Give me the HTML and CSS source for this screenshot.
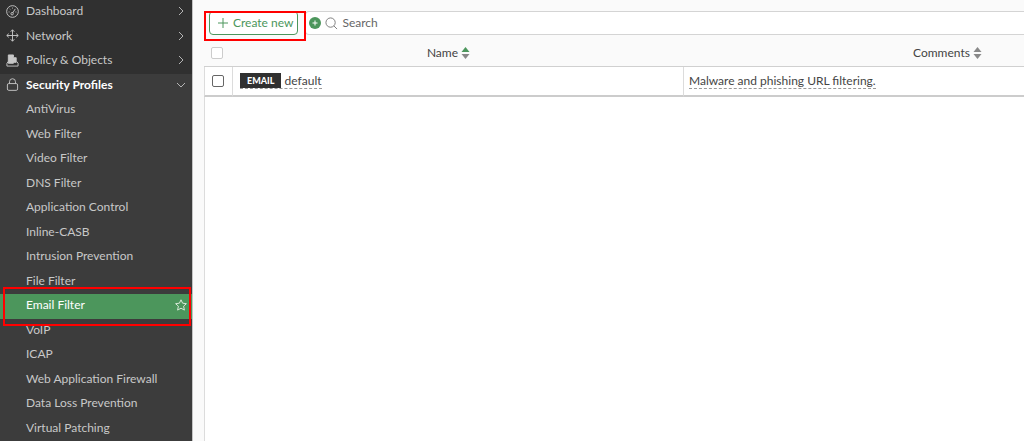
FILE: index.html
```html
<!DOCTYPE html>
<html lang="en">
<head>
  <meta charset="UTF-8">
  <title>Email Filter</title>
  <link rel="stylesheet" href="styles.css">
</head>
<body>

  <!-- Side menu -->
  <nav class="sidebar">
    <a class="item" href="#">
      <svg class="icon" viewBox="0 0 14 14"><circle cx="7" cy="7" r="6.3"/><path d="M7.2 8.6L10 4.2M2.8 7.5h1M4 4.3l.7.6M7 2.8v1M10.2 7.5h1"/><circle cx="6.6" cy="9.4" r="1.3"/></svg>
      <span>Dashboard</span>
      <svg class="arrow" viewBox="0 0 10 10"><path d="M3 1l4 4-4 4"/></svg>
    </a>
    <a class="item" href="#">
      <svg class="icon" viewBox="0 0 14 14"><path d="M7 1v12M1 7h12M5 3l2-2.2L9 3M5 11l2 2.2L9 11M3 5L.8 7 3 9M11 5l2.2 2L11 9"/></svg>
      <span>Network</span>
      <svg class="arrow" viewBox="0 0 10 10"><path d="M3 1l4 4-4 4"/></svg>
    </a>
    <a class="item" href="#">
      <svg class="icon" viewBox="0 0 14 14"><path class="solid" d="M2.5 1h5.5v3h3v5h-2l-1 1h-5.5z"/><path d="M2.5 8L1 10v3h12v-3l-1.5-2"/></svg>
      <span>Policy &amp; Objects</span>
      <svg class="arrow" viewBox="0 0 10 10"><path d="M3 1l4 4-4 4"/></svg>
    </a>
    <a class="item open" href="#">
      <svg class="icon" viewBox="0 0 14 14"><rect x="1.5" y="6" width="11" height="7.3" rx="1.5"/><path d="M3.8 6V4a3.2 3.2 0 0 1 6.4 0v2"/></svg>
      <span>Security Profiles</span>
      <svg class="arrow" viewBox="0 0 10 10"><path d="M1 3l4 4 4-4"/></svg>
    </a>
    <a class="item sub" href="#">AntiVirus</a>
    <a class="item sub" href="#">Web Filter</a>
    <a class="item sub" href="#">Video Filter</a>
    <a class="item sub" href="#">DNS Filter</a>
    <a class="item sub" href="#">Application Control</a>
    <a class="item sub" href="#">Inline-CASB</a>
    <a class="item sub" href="#">Intrusion Prevention</a>
    <a class="item sub" href="#">File Filter</a>
    <a class="item sub active" href="#">
      <span>Email Filter</span>
      <svg class="star" viewBox="0 0 12 12"><path d="M6 .8l1.6 3.4 3.8.5-2.8 2.5.8 3.9L6 9.2l-3.4 1.9.8-3.9L.6 4.7l3.8-.5z"/></svg>
    </a>
    <a class="item sub" href="#">VoIP</a>
    <a class="item sub" href="#">ICAP</a>
    <a class="item sub" href="#">Web Application Firewall</a>
    <a class="item sub" href="#">Data Loss Prevention</a>
    <a class="item sub" href="#">Virtual Patching</a>
  </nav>

  <main class="content">
    <!-- Toolbar -->
    <div class="toolbar">
      <div class="create-box">
        <button class="create" type="button">
          <svg class="plus" viewBox="0 0 10 10"><path d="M5 0v10M0 5h10"/></svg>
          Create new
        </button>
      </div>
      <div class="search">
        <svg class="add" viewBox="0 0 12 12"><circle cx="6" cy="6" r="6"/><path d="M6 3.5v5M3.5 6h5"/></svg>
        <svg class="lens" viewBox="0 0 14 14"><circle cx="6" cy="6" r="5"/><path d="M9.6 9.6L13 13"/></svg>
        <input type="text" aria-label="Search" placeholder="Search">
      </div>
    </div>

    <!-- Profile list -->
    <table class="profiles">
      <colgroup>
        <col class="col-check">
        <col class="col-name">
        <col>
      </colgroup>
      <thead>
        <tr>
          <th class="check"><input type="checkbox" aria-label="Select all" disabled></th>
          <th class="name">Name <svg class="sort asc" viewBox="0 0 8 12"><path class="up" d="M0 5l4-5 4 5z"/><path d="M0 7h8l-4 5z"/></svg></th>
          <th class="comments">Comments <svg class="sort" viewBox="0 0 8 12"><path class="up" d="M0 5l4-5 4 5z"/><path d="M0 7h8l-4 5z"/></svg></th>
        </tr>
      </thead>
      <tbody>
        <tr>
          <td class="check"><input type="checkbox" aria-label="Select default"></td>
          <td><span class="dotted"><span class="tag">EMAIL</span> default</span></td>
          <td class="comment"><span class="dotted">Malware and phishing URL filtering.</span></td>
        </tr>
      </tbody>
    </table>
    <div class="empty"></div>
  </main>

  <!-- Highlight frames -->
  <div class="frame frame-create"></div>
  <div class="frame frame-email"></div>

</body>
</html>
```
FILE: styles.css
```css
* { box-sizing: border-box; }
body {
  margin: 0;
  min-height: 100vh;
  display: flex;
  font-family: Lato, "Liberation Sans", sans-serif;
  font-size: 12px;
  line-height: 16px;
  color: #444;
  background: #fafafa;
}
svg {
  fill: none;
  stroke: currentColor;
  flex: none;
}

/* side menu */
.sidebar {
  width: 193px;
  flex: none;
  display: flex;
  flex-direction: column;
  background: #3c3c3c;
  border-right: 1px solid #c4c4c4;
}
.item {
  flex: 1;
  display: flex;
  align-items: center;
  padding: 0 6px 2px;
  color: #c8c8c8;
  background: #303030;
  text-decoration: none;
}
.item span { flex: 1; }
.icon { width: 13px; height: 13px; margin-right: 7px; color: #c8c8c8; }
.icon .solid { fill: currentColor; }
.arrow { width: 10px; height: 10px; color: #b4b4b4; }
.sub { padding-left: 26px; }
.open, .sub { background: #3c3c3c; }
.open { color: #fff; font-weight: bold; }
.active { padding-right: 5px; color: #fff; background: #4c965c; }
.star { width: 12px; height: 12px; color: #d8ead8; }

/* toolbar */
.content {
  flex: 1;
  min-width: 0;
  display: flex;
  flex-direction: column;
  padding: 11px 0 0 11px;
}
.toolbar { display: flex; }
.create-box { padding: 0 7px 0 5px; }
.create {
  display: flex;
  align-items: center;
  gap: 5px;
  height: 24px;
  padding: 0 4px 0 8px;
  font: inherit;
  color: #4c965c;
  background: #fff;
  border: 1px solid #4c965c;
  border-radius: 4px;
}
.plus { width: 10px; height: 10px; }
.search {
  flex: 1;
  display: flex;
  align-items: center;
  gap: 4px;
  padding-left: 3px;
  background: #fff;
  border: 1px solid #d4d4d4;
  border-right: 0;
  border-radius: 4px 0 0 4px;
}
.search input {
  flex: 1;
  min-width: 0;
  padding: 0;
  font: inherit;
  color: #444;
  background: none;
  border: 0;
  outline: 0;
}
.search input::placeholder { color: #666; }
.add { width: 12px; height: 12px; stroke: #fff; }
.add circle { fill: #4c965c; stroke: none; }
.lens { width: 13px; height: 13px; color: #777; }

/* profile list */
.profiles {
  width: 100%;
  table-layout: fixed;
  border-spacing: 0;
}
.col-check { width: 28px; }
.col-name { width: 55%; }
th {
  height: 32px;
  padding: 4px 0 0;
  font-weight: normal;
  border-bottom: 1px solid #d0d0d0;
}
th.name { padding-right: 18px; }
th.comments { padding-left: 188px; }
td {
  height: 30px;
  padding: 0 0 0 7px;
  background: #fff;
  border-left: 1px solid #dcdcdc;
  border-bottom: 2px solid #ccc;
}
td.comment { padding-left: 5px; }
.check { padding-left: 7px; text-align: left; }
.check input {
  display: block;
  width: 12px;
  height: 12px;
  margin: 0;
  appearance: none;
  background: #fff;
  border: 1px solid #666;
  border-radius: 2px;
}
.check input:disabled { border-color: #ccc; }
.sort {
  width: 9px;
  height: 12px;
  vertical-align: -2px;
  fill: #888;
  stroke: none;
}
.asc .up { fill: #4c965c; }
.dotted { border-bottom: 1px dashed #999; }
.tag {
  display: inline-block;
  padding: 0 7px;
  font-size: 9px;
  font-weight: 900;
  line-height: 15px;
  vertical-align: 1px;
  color: #fff;
  background: #303030;
}
.empty {
  flex: 1;
  background: #fff;
  border-left: 1px solid #dcdcdc;
}

/* highlight frames */
.frame {
  position: absolute;
  border: 2px solid #f00;
  pointer-events: none;
}
.frame-create { left: 204px; top: 11px; width: 102px; height: 30px; }
.frame-email { left: 3px; top: 287px; width: 188px; height: 39px; }
```
